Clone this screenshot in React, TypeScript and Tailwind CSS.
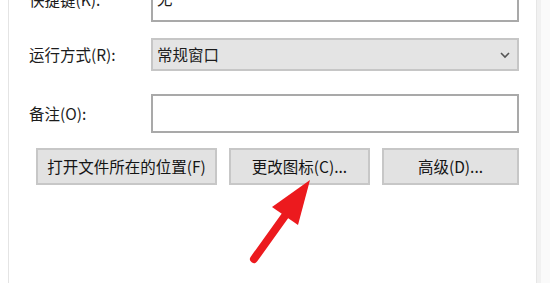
/**
 * Shortcut properties dialog fragment with run mode, comment and action buttons
 */

const FONT = "font-['Microsoft_YaHei','Noto_Sans_CJK_SC',sans-serif]"

function Label({ children }: { children: React.ReactNode }) {
  return <div className="w-[122px] shrink-0 text-[15.5px] text-[#1c1c1c]">{children}</div>
}

function DialogButton({ label, width }: { label: string; width: string }) {
  return (
    <button
      className={`${width} h-[37px] shrink-0 border-2 border-[#c7c7c7] bg-[#e2e2e2] text-[15.5px] text-[#141414]`}
    >
      {label}
    </button>
  )
}

function Arrow() {
  return (
    <svg className="pointer-events-none absolute left-0 top-0" width="550" height="283">
      <line x1="254" y1="259" x2="287" y2="213" stroke="#ec1a1e" strokeWidth="8" strokeLinecap="round" />
      <polygon points="310,180 272,207 298,225" fill="#ec1a1e" />
    </svg>
  )
}

export default function App() {
  return (
    <div className={`relative flex h-[283px] w-[550px] overflow-hidden bg-white ${FONT}`}>
      {/* left panel edge */}
      <div className="w-[9px] shrink-0 border-r border-[#e4e4e4] bg-white" />

      {/* form */}
      <div className="flex w-[527px] shrink-0 flex-col pl-[20px] pr-[17px]">
        <div className="-mt-[8px] flex h-[30px] items-center">
          <Label>
            <span className="relative -top-[7px]">快捷键(K):</span>
          </Label>
          <div className="flex h-full flex-1 items-start border-2 border-[#a9a9a9] bg-white pl-[4px] text-[15.5px] text-[#1c1c1c]">
            <span className="-mt-[7px]">无</span>
          </div>
        </div>

        <div className="mt-[16px] flex h-[33px] items-center">
          <Label>运行方式(R):</Label>
          <div className="flex h-full flex-1 items-center justify-between border-2 border-[#c6c6c6] bg-[#e4e4e4] pl-[4px] pr-[6px] text-[15.5px] text-[#1c1c1c]">
            <span>常规窗口</span>
            <svg width="12" height="8" viewBox="0 0 12 8">
              <path d="M2 2 L6 6 L10 2" fill="none" stroke="#555" strokeWidth="1.6" />
            </svg>
          </div>
        </div>

        <div className="mt-[23px] flex h-[39px] items-center">
          <Label>备注(O):</Label>
          <div className="h-full flex-1 border-2 border-[#a9a9a9] bg-white" />
        </div>

        <div className="mt-[15px] flex gap-[12px] pl-[7px]">
          <DialogButton label="打开文件所在的位置(F)" width="w-[181px]" />
          <DialogButton label="更改图标(C)..." width="w-[141px]" />
          <DialogButton label="高级(D)..." width="w-[137px]" />
        </div>
      </div>

      {/* right panel edge */}
      <div className="w-[5px] shrink-0 border-l border-[#e6e6e6] bg-[#f1f1f1]" />
      <div className="flex-1 bg-[#fafafa]" />

      <Arrow />
    </div>
  )
}
